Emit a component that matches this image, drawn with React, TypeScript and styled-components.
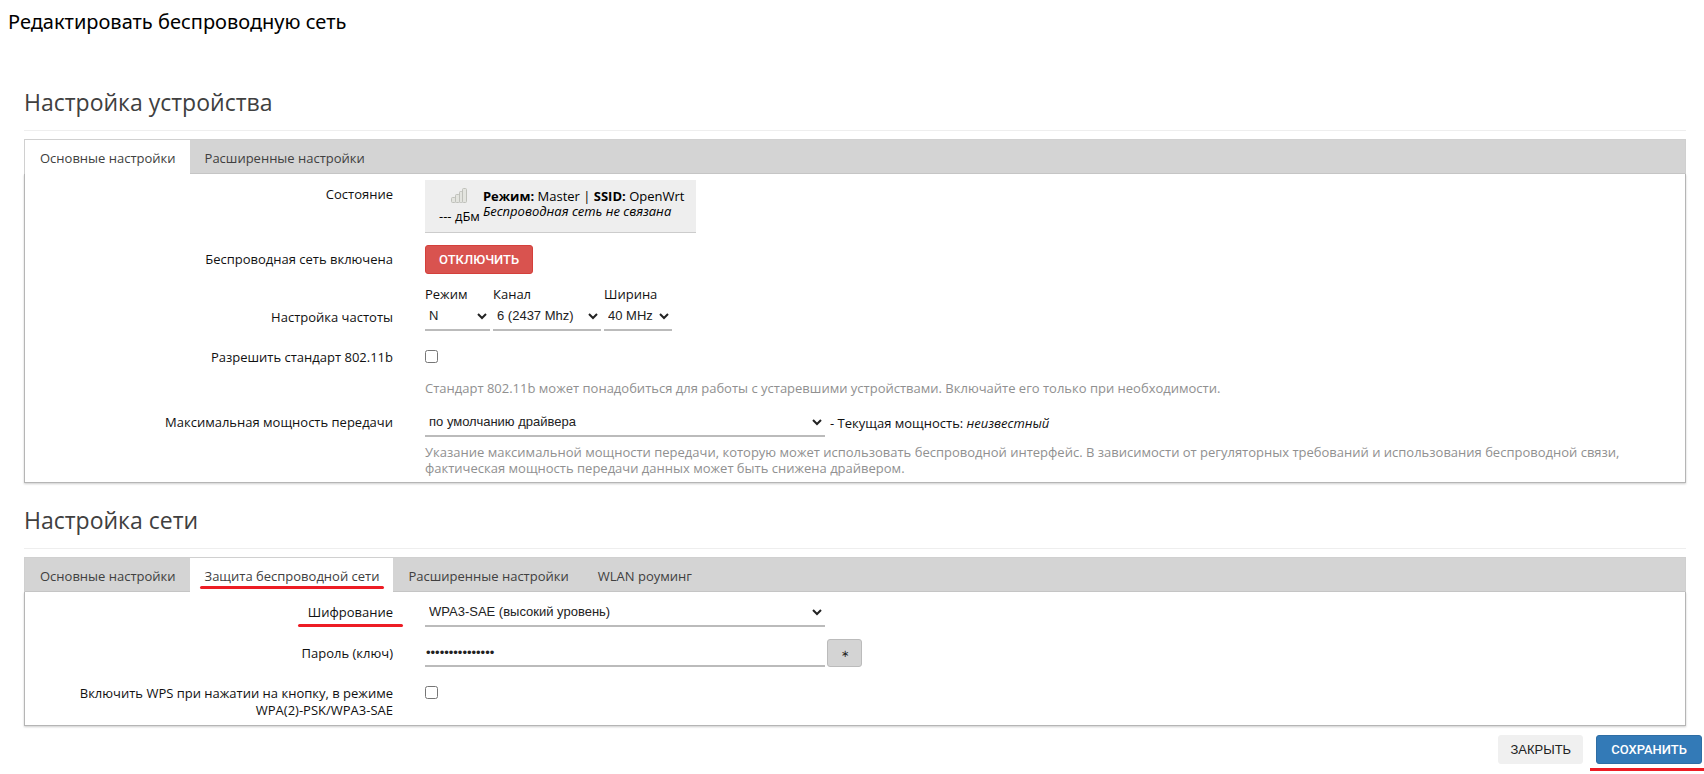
import React, { useState } from "react";
import styled, { createGlobalStyle, css } from "styled-components";

const GlobalStyle = createGlobalStyle`
  *, *::before, *::after { box-sizing: border-box; }
  body {
    margin: 0;
    background: #fff;
    color: #111;
    font: 13px/16px "Open Sans", "Noto Sans", sans-serif;
    overflow-x: hidden;
  }
`;

const Page = styled.main`
  padding: 9px 0 0;
`;

const Title = styled.h1`
  margin: 0 8px 48px;
  font-family: "Noto Sans", sans-serif;
  font-size: 20px;
  line-height: 26px;
  font-weight: 400;
  color: #000;
`;

const Section = styled.section`
  margin: 0 18px 18px 24px;
`;

const Heading = styled.h2`
  margin: 0 0 8px;
  padding: 1px 0 10px;
  border-bottom: 1px solid #eee;
  font-size: 23px;
  line-height: 36px;
  font-weight: 400;
  color: #404040;
`;

const TabBar = styled.nav`
  display: flex;
  background: #d4d4d4;
  border: 1px solid #d0d0d0;
  border-bottom: 0;
  box-shadow: inset 0 -1px #c8c8c8;
`;

const Panel = styled.div`
  border: 1px solid #b5b5b5;
  border-top: 0;
  box-shadow: 0 1px 2px rgba(0, 0, 0, 0.2);
`;

const Tab = styled.a<{ $active?: boolean }>`
  padding: 10px 14px 7px 15px;
  line-height: 17px;
  color: #404040;
  text-decoration: none;
  ${(p) => p.$active && css`background: #fff;`}
`;

const Marked = styled.span<{ $outset: number; $drop: number }>`
  position: relative;
  &::after {
    content: "";
    position: absolute;
    left: ${(p) => -p.$outset}px;
    right: ${(p) => -p.$outset}px;
    bottom: ${(p) => -p.$drop}px;
    height: 3px;
    border-radius: 2px;
    background: #ed1c24;
  }
`;

const Row = styled.div`
  display: flex;
  gap: 32px;
  padding: 6px 20px 6px 0;
`;

const Label = styled.label<{ $low?: boolean }>`
  flex: 0 0 368px;
  padding-top: ${(p) => (p.$low ? 23 : 6)}px;
  padding-left: 40px;
  line-height: 17px;
  text-align: right;
`;

const Field = styled.div`
  flex: 1;
  min-width: 0;
`;

const Inline = styled.div<{ $gap: number }>`
  display: flex;
  align-items: center;
  gap: ${(p) => p.$gap}px;
`;

const Help = styled.p<{ $gap: number }>`
  margin: ${(p) => p.$gap}px 0 0;
  color: #909090;
`;

const Status = styled.div`
  display: inline-flex;
  align-items: flex-start;
  gap: 3px;
  height: 53px;
  padding: 8px 12px 0 14px;
  background: #eee;
  border-bottom: 1px solid #ccc;
  vertical-align: top;
  color: #000;
`;

const Signal = styled.div`
  display: flex;
  flex-direction: column;
  align-items: center;
  gap: 4px;
  svg { display: block; }
`;

const StatusText = styled.div`
  padding-top: 1px;
  line-height: 15px;
`;

const control = css`
  font-family: "Liberation Sans", Arial, sans-serif;
  font-size: 13px;
  color: #222;
`;

const Select = styled.select<{ $width: number }>`
  ${control}
  display: block;
  width: ${(p) => p.$width}px;
  height: 29px;
  padding: 0;
  border: 0;
  border-bottom: 2px solid #bbb;
  border-radius: 0;
  background: #fff;
`;

const Option = styled.label`
  display: block;
`;

const Password = styled.input`
  ${control}
  width: 400px;
  height: 28px;
  padding: 0 1px;
  border: 0;
  border-bottom: 2px solid #bbb;
  background: #fff;
  outline: 0;
`;

const Check = styled.input`
  display: block;
  width: 13px;
  height: 13px;
  margin: 7px 0 0;
`;

const strong = css`
  font-family: Roboto, sans-serif;
  font-weight: 500;
  color: #fff;
`;

const tones = {
  danger: css`${strong} background: #d9534f; border-color: #d43f3a;`,
  primary: css`${strong} background: #337ab7; border-color: #2e6da4; padding: 0 14px;`,
  plain: css`background: #f0f0f0; border-color: #f0f0f0; padding: 0 11px;`,
  reveal: css`background: #d4d4d4; border-color: #bbb; height: 28px; width: 35px; padding: 0; font-size: 10px;`,
};

const Button = styled.button<{ $tone: keyof typeof tones }>`
  ${control}
  display: block;
  height: 29px;
  padding: 0 13px;
  border: 1px solid;
  border-radius: 3px;
  ${(p) => tones[p.$tone]}
`;

const Footer = styled.footer`
  display: flex;
  justify-content: flex-end;
  gap: 13px;
  margin-top: -9px;
  padding: 0 2px 10px 0;
`;

const SaveWrap = styled.div`
  position: relative;
  &::after {
    content: "";
    position: absolute;
    left: -6px;
    right: -2px;
    bottom: -7px;
    height: 3px;
    background: #ed1c24;
  }
`;

const SignalIcon = () => (
  <svg width="16" height="16" viewBox="0 0 16 16" fill="#e3e4df" stroke="#bfc0ba" aria-hidden="true">
    <rect x="0.5" y="9.5" width="4" height="5" rx="1" />
    <rect x="4.5" y="6.5" width="4" height="8" rx="1" />
    <rect x="8.5" y="3.5" width="3" height="11" rx="1" />
    <rect x="11.5" y="0.5" width="4" height="14" rx="1" />
  </svg>
);

export default function App() {
  const [shown, setShown] = useState(false);
  return (
    <>
      <GlobalStyle />
      <Page>
        <Title>Редактировать беспроводную сеть</Title>

        <Section>
          <Heading>Настройка устройства</Heading>
          <TabBar>
            <Tab href="#general" $active>Основные настройки</Tab>
            <Tab href="#advanced">Расширенные настройки</Tab>
          </TabBar>
          <Panel>
            <Row>
              <Label as="div">Состояние</Label>
              <Field>
                <Status>
                  <Signal>
                    <SignalIcon />
                    <span>--- дБм</span>
                  </Signal>
                  <StatusText>
                    <b>Режим:</b> Master | <b>SSID:</b> OpenWrt
                    <br />
                    <i>Беспроводная сеть не связана</i>
                  </StatusText>
                </Status>
              </Field>
            </Row>
            <Row>
              <Label htmlFor="toggle">Беспроводная сеть включена</Label>
              <Field>
                <Button id="toggle" type="button" $tone="danger">ОТКЛЮЧИТЬ</Button>
              </Field>
            </Row>
            <Row>
              <Label as="div" $low>Настройка частоты</Label>
              <Field>
                <Inline $gap={3}>
                  <Option>
                    Режим
                    <Select $width={65}><option>N</option></Select>
                  </Option>
                  <Option>
                    Канал
                    <Select $width={108}><option>6 (2437 Mhz)</option></Select>
                  </Option>
                  <Option>
                    Ширина
                    <Select $width={68}><option>40 MHz</option></Select>
                  </Option>
                </Inline>
              </Field>
            </Row>
            <Row>
              <Label htmlFor="legacy">Разрешить стандарт 802.11b</Label>
              <Field>
                <Check id="legacy" type="checkbox" />
                <Help $gap={17}>
                  Стандарт 802.11b может понадобиться для работы с устаревшими устройствами. Включайте его только при необходимости.
                </Help>
              </Field>
            </Row>
            <Row>
              <Label htmlFor="power">Максимальная мощность передачи</Label>
              <Field>
                <Inline $gap={5}>
                  <Select id="power" $width={400}><option>по умолчанию драйвера</option></Select>
                  <span>- Текущая мощность: <i>неизвестный</i></span>
                </Inline>
                <Help $gap={7}>
                  Указание максимальной мощности передачи, которую может использовать беспроводной интерфейс. В зависимости от регуляторных требований и использования беспроводной связи, фактическая мощность передачи данных может быть снижена драйвером.
                </Help>
              </Field>
            </Row>
          </Panel>
        </Section>

        <Section>
          <Heading>Настройка сети</Heading>
          <TabBar>
            <Tab href="#net-general">Основные настройки</Tab>
            <Tab href="#net-security" $active>
              <Marked $outset={5} $drop={4}>Защита беспроводной сети</Marked>
            </Tab>
            <Tab href="#net-advanced">Расширенные настройки</Tab>
            <Tab href="#net-roaming">WLAN роуминг</Tab>
          </TabBar>
          <Panel>
            <Row>
              <Label htmlFor="encryption">
                <Marked $outset={10} $drop={6}>Шифрование</Marked>
              </Label>
              <Field>
                <Select id="encryption" $width={400}><option>WPA3-SAE (высокий уровень)</option></Select>
              </Field>
            </Row>
            <Row>
              <Label htmlFor="key">Пароль (ключ)</Label>
              <Field>
                <Inline $gap={2}>
                  <Password id="key" type={shown ? "text" : "password"} defaultValue="openwrt-network" />
                  <Button type="button" $tone="reveal" onClick={() => setShown(!shown)}>∗</Button>
                </Inline>
              </Field>
            </Row>
            <Row>
              <Label htmlFor="wps">Включить WPS при нажатии на кнопку, в режиме WPA(2)-PSK/WPA3-SAE</Label>
              <Field>
                <Check id="wps" type="checkbox" />
              </Field>
            </Row>
          </Panel>
        </Section>

        <Footer>
          <Button type="button" $tone="plain">ЗАКРЫТЬ</Button>
          <SaveWrap>
            <Button type="button" $tone="primary">СОХРАНИТЬ</Button>
          </SaveWrap>
        </Footer>
      </Page>
    </>
  );
}
